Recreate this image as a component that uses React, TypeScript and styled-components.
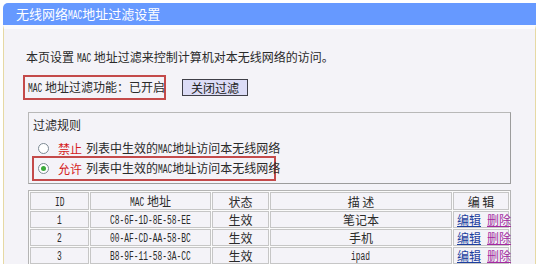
import React from "react";
import styled, { createGlobalStyle } from "styled-components";

const GlobalStyle = createGlobalStyle`
  body {
    margin: 0;
    background: #fff;
    font-family: "Noto Sans CJK SC", "Liberation Sans", sans-serif;
    color: #2a2a2a;
  }
`;

const Frame = styled.div`
  width: 533px;
  height: 261px;
  padding-top: 3px;
  margin-left: 3px;
  overflow: hidden;
`;

const TitleBar = styled.div`
  height: 22px;
  background: #6699ff;
  border-radius: 5px 0 0 0;
  color: #fff;
  font-size: 13px;
  line-height: 22px;
  padding-left: 13px;
  white-space: nowrap;
`;

// condensed bitmap-like latin text: mono font squeezed horizontally
const Narrow = styled.span<{ $size?: number; $chars: number }>`
  display: inline-block;
  font-family: "Liberation Mono", monospace;
  font-size: ${({ $size }) => $size ?? 12}px;
  line-height: 1;
  transform: scaleX(0.66);
  transform-origin: left center;
  margin-right: ${({ $chars }) => -0.34 * $chars}ch;
`;

const Panel = styled.div`
  height: 240px;
  background: #f4f3f8;
  border-top: 4px solid #fbfbfd;
  border-left: 1px solid #e6d9a4;
  border-right: 1px solid #e6d9a4;
`;

const Intro = styled.p`
  height: 14px;
  margin: 21px 0 0 22px;
  font-size: 12px;
  line-height: 14px;
  white-space: nowrap;
`;

const StatusRow = styled.div`
  display: flex;
  align-items: center;
  height: 25px;
  margin-top: 11px;
  padding-left: 19px;
`;

const RedBox = styled.div<{ $width: number }>`
  box-sizing: border-box;
  display: flex;
  align-items: center;
  width: ${({ $width }) => $width}px;
  height: 25px;
  border: 2px solid #c44a4a;
  font-size: 12px;
  white-space: nowrap;
`;

const StatusText = styled.span`
  padding-left: 3px;
  line-height: 14px;
`;

const ToggleButton = styled.button`
  box-sizing: border-box;
  margin-left: 16px;
  width: 66px;
  height: 17px;
  padding: 0;
  background: #dcdcf6;
  border: 1px solid #3f3f48;
  font-family: inherit;
  font-size: 12px;
  line-height: 15px;
  color: #222;
`;

const RuleBox = styled.div`
  box-sizing: border-box;
  width: 483px;
  height: 72px;
  margin: 12px 0 0 24px;
  border: 1px solid #b8b8b8;
  border-right-color: #9c9c9c;
  border-bottom-color: #9c9c9c;
`;

const RuleLabel = styled.div`
  height: 14px;
  padding: 5px 0 0 4px;
  font-size: 12px;
  line-height: 14px;
`;

const RadioRow = styled.label`
  display: flex;
  align-items: center;
  height: 16px;
  margin-top: 8px;
  padding-left: 9px;
  font-size: 12px;
  white-space: nowrap;
`;

const RadioBoxed = styled(RedBox)`
  margin-left: 3px;
  padding-left: 4px;
`;

const Radio = styled.span<{ $checked?: boolean }>`
  box-sizing: border-box;
  width: 11px;
  height: 11px;
  border-radius: 50%;
  border: 1px solid #7d8a94;
  background: #fff;
  display: inline-flex;
  align-items: center;
  justify-content: center;
  flex-shrink: 0;
  &::after {
    content: "";
    width: 5px;
    height: 5px;
    border-radius: 50%;
    background: ${({ $checked }) => ($checked ? "#3caa3c" : "transparent")};
  }
`;

const Keyword = styled.span`
  color: #d42020;
  margin: 0 4px 0 9px;
`;

const RuleText = styled.span`
  line-height: 14px;
`;

const Table = styled.table`
  margin: 6px 0 0 24px;
  width: 483px;
  border: 1px solid #b4b4b4;
  border-collapse: separate;
  border-spacing: 1px;
  background: #fbfbfb;
  table-layout: fixed;
  font-size: 12px;
`;

const Th = styled.th<{ $w: number }>`
  box-sizing: border-box;
  width: ${({ $w }) => $w}px;
  height: 17px;
  padding: 0;
  font-weight: normal;
  border: 1px solid #c6c6c6;
  background: #f4f3f8;
  text-align: center;
  line-height: 15px;
  white-space: nowrap;
`;

const Td = styled.td`
  box-sizing: border-box;
  height: 16px;
  padding: 0;
  border: 1px solid #c6c6c6;
  background: #f4f3f8;
  text-align: center;
  line-height: 14px;
  white-space: nowrap;
`;

const Link = styled.a<{ $purple?: boolean }>`
  color: ${({ $purple }) => ($purple ? "#a32a9f" : "#1d3f9e")};
  text-decoration: underline;
  margin: 0 3px;
`;

const rows = [
  { id: "1", mac: "C8-6F-1D-8E-58-EE", desc: "笔记本" },
  { id: "2", mac: "00-AF-CD-AA-58-BC", desc: "手机" },
  { id: "3", mac: "B8-9F-11-58-3A-CC", desc: "ipad" },
];

const Mac = () => <Narrow $chars={3}>MAC</Narrow>;

export default function App() {
  return (
    <>
      <GlobalStyle />
      <Frame>
        <TitleBar>
          无线网络<Narrow $size={12} $chars={3}>MAC</Narrow>地址过滤设置
        </TitleBar>
        <Panel>
          <Intro>
            本页设置 <Mac /> 地址过滤来控制计算机对本无线网络的访问。
          </Intro>

          <StatusRow>
            <RedBox $width={143}>
              <StatusText>
                <Mac /> 地址过滤功能：已开启
              </StatusText>
            </RedBox>
            <ToggleButton>关闭过滤</ToggleButton>
          </StatusRow>

          <RuleBox>
            <RuleLabel>过滤规则</RuleLabel>
            <RadioRow>
              <Radio />
              <Keyword>禁止</Keyword>
              <RuleText>
                列表中生效的<Mac />地址访问本无线网络
              </RuleText>
            </RadioRow>
            <RadioBoxed $width={244}>
              <Radio $checked />
              <Keyword>允许</Keyword>
              <RuleText>
                列表中生效的<Mac />地址访问本无线网络
              </RuleText>
            </RadioBoxed>
          </RuleBox>

          <Table>
            <thead>
              <tr>
                <Th $w={59}><Narrow $chars={2}>ID</Narrow></Th>
                <Th $w={121}><Mac /> 地址</Th>
                <Th $w={57}>状态</Th>
                <Th $w={182}>描 述</Th>
                <Th $w={56}>编 辑</Th>
              </tr>
            </thead>
            <tbody>
              {rows.map((r) => (
                <tr key={r.id}>
                  <Td><Narrow $chars={1}>{r.id}</Narrow></Td>
                  <Td><Narrow $chars={r.mac.length}>{r.mac}</Narrow></Td>
                  <Td>生效</Td>
                  <Td>
                    {r.desc === "ipad" ? <Narrow $chars={4}>{r.desc}</Narrow> : r.desc}
                  </Td>
                  <Td>
                    <Link>编辑</Link>
                    <Link $purple>删除</Link>
                  </Td>
                </tr>
              ))}
            </tbody>
          </Table>
        </Panel>
      </Frame>
    </>
  );
}
